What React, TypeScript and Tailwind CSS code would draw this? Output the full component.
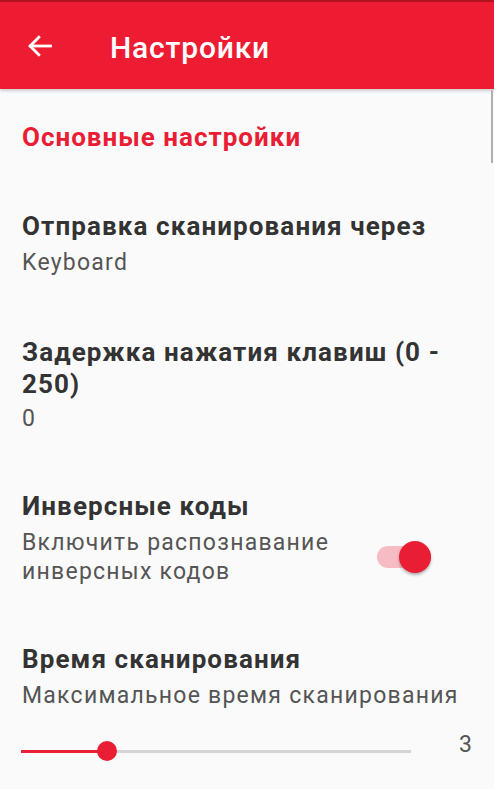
import React from "react";

function Title({ children }: { children: React.ReactNode }) {
  return <div className="text-[26px] leading-[32px] font-bold tracking-[1.1px] text-[#333333]">{children}</div>;
}

function Sub({ children, className = "" }: { children: React.ReactNode; className?: string }) {
  return <div className={"text-[23px] tracking-[1.25px] text-[#555555] " + className}>{children}</div>;
}

export default function App() {
  return (
    <div className="relative min-h-[789px] bg-[#fafafa] font-['Roboto',sans-serif] overflow-hidden">
      {/* Toolbar */}
      <header className="h-[89px] bg-[#ed1c33] border-t-2 border-[#b3121f] flex items-center shadow-[0_2px_3px_rgba(0,0,0,0.18)]">
        <svg className="ml-[26px] w-[28px] h-[28px]" viewBox="0 0 24 24" fill="none" stroke="white" strokeWidth="2.4" strokeLinecap="square">
          <path d="M21 12H4" />
          <path d="M11 4.5 3.5 12 11 19.5" />
        </svg>
        <h1 className="ml-[56px] pt-[4px] text-[30px] leading-[36px] font-medium text-white tracking-[0.8px]">Настройки</h1>
      </header>

      {/* scrollbar */}
      <div className="absolute right-[1px] top-[90px] w-[2px] h-[73px] bg-[#b0b0b0]" />

      <main className="px-[22px]">
        <div className="pt-[32px] text-[26px] leading-[32px] font-bold tracking-[1px] text-[#e91d34]">Основные настройки</div>

        <div className="pt-[57px]">
          <Title>Отправка сканирования через</Title>
          <Sub className="leading-[30px] mt-[6px]">Keyboard</Sub>
        </div>

        <div className="pt-[58px]">
          <Title>
            Задержка нажатия клавиш (0 -
            <br />
            250)
          </Title>
          <Sub className="leading-[30px] mt-[4px]">0</Sub>
        </div>

        <div className="pt-[56px]">
          <Title>Инверсные коды</Title>
          <div className="flex items-center mt-[6px]">
            <Sub className="leading-[29px] flex-1">
              Включить распознавание
              <br />
              инверсных кодов
            </Sub>
            <div className="relative w-[54px] h-[32px] mr-[41px] flex items-center">
              <div className="w-[54px] h-[22px] rounded-full bg-[#f7bcc3]" />
              <div className="absolute right-0 top-0 w-[32px] h-[32px] rounded-full bg-[#e91d34] shadow-[0_2px_3px_rgba(0,0,0,0.3)]" />
            </div>
          </div>
        </div>

        <div className="pt-[57px]">
          <Title>Время сканирования</Title>
          <Sub className="leading-[30px] mt-[6px]">Максимальное время сканирования</Sub>
          <div className="flex items-start mt-[30px]">
            <div className="relative w-[390px] h-[20px] flex items-center -ml-[1px]">
              <div className="w-[86px] h-[3px] bg-[#e91d34]" />
              <div className="flex-1 h-[3px] bg-[#d4d4d4]" />
              <div className="absolute left-[76px] w-[20px] h-[20px] rounded-full bg-[#e91d34]" />
            </div>
            <Sub className="ml-auto -mt-[11px] leading-[30px] tracking-normal">3</Sub>
          </div>
        </div>
      </main>
    </div>
  );
}
